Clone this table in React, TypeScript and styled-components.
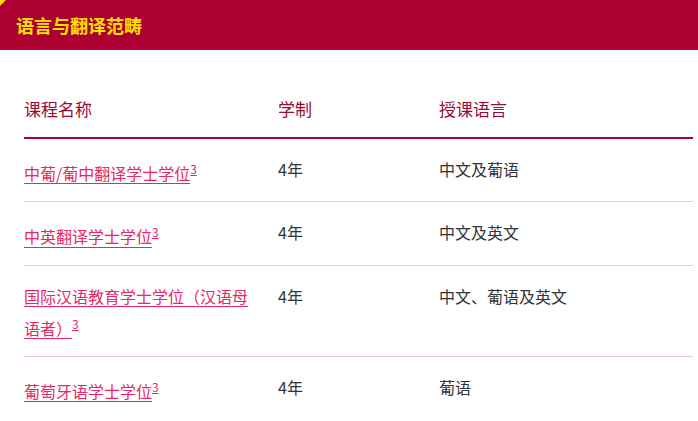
import React from "react";
import styled, { createGlobalStyle } from "styled-components";

const Global = createGlobalStyle`
  html, body { margin: 0; padding: 0; background: #ffffff; }
  body { font-family: "Noto Sans CJK SC", "Noto Sans", sans-serif; }
`;

const Page = styled.div`
  width: 698px;
  background: #ffffff;
`;

const Band = styled.header`
  position: relative;
  height: 50px;
  background: #ad0033;
  display: flex;
  align-items: center;
  padding-left: 16px;
`;

const Corner = styled.span`
  position: absolute;
  left: 0;
  top: 0;
  width: 0;
  height: 0;
  border-top: 6px solid #ffd400;
  border-right: 6px solid transparent;
`;

const Title = styled.h2`
  margin: 0;
  font-size: 18px;
  font-weight: 700;
  color: #ffe100;
  line-height: 1;
`;

const Table = styled.table`
  margin: 30px 0 0 24px;
  width: 669px;
  border-collapse: collapse;
  table-layout: fixed;
`;

const Th = styled.th<{ $w?: number }>`
  width: ${(p) => (p.$w ? `${p.$w}px` : "auto")};
  text-align: left;
  font-size: 17px;
  font-weight: 400;
  color: #970c33;
  line-height: 30px;
  padding: 14px 0 13px;
  border-bottom: 2px solid #ad0033;
`;

const Row = styled.tr`
  border-bottom: 1px solid #f0c4d4;
  &:last-child { border-bottom: none; }
`;

const Td = styled.td`
  vertical-align: top;
  font-size: 16px;
  line-height: 28px;
  color: #333333;
  padding: 16px 20px 14px 0;
`;

const Link = styled.a`
  color: #e8266a;
  text-decoration: underline;
  text-underline-offset: 3px;
`;

const Sup = styled.sup`
  font-size: 12px;
  vertical-align: super;
  color: #e8266a;
  text-decoration: underline;
`;

const rows = [
  { name: "中葡/葡中翻译学士学位", years: "4年", lang: "中文及葡语" },
  { name: "中英翻译学士学位", years: "4年", lang: "中文及英文" },
  { name: "国际汉语教育学士学位（汉语母语者）", years: "4年", lang: "中文、葡语及英文" },
  { name: "葡萄牙语学士学位", years: "4年", lang: "葡语" },
];

export default function App() {
  return (
    <Page>
      <Global />
      <Band>
        <Corner />
        <Title>语言与翻译范畴</Title>
      </Band>
      <Table>
        <thead>
          <tr>
            <Th $w={254}>课程名称</Th>
            <Th $w={161}>学制</Th>
            <Th>授课语言</Th>
          </tr>
        </thead>
        <tbody>
          {rows.map((r) => (
            <Row key={r.name}>
              <Td>
                <Link href="#">{r.name}</Link>
                <Sup>3</Sup>
              </Td>
              <Td>{r.years}</Td>
              <Td>{r.lang}</Td>
            </Row>
          ))}
        </tbody>
      </Table>
    </Page>
  );
}
